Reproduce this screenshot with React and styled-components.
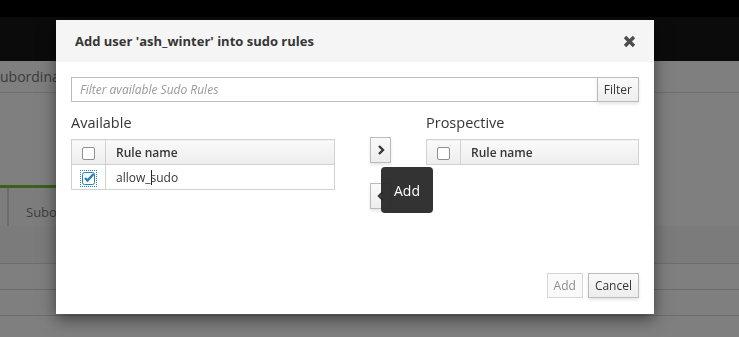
import React from "react";
import styled, { createGlobalStyle } from "styled-components";

const GlobalStyle = createGlobalStyle`
  body {
    margin: 0;
    background: #7f7f7f;
    font-family: "Open Sans", "Noto Sans", sans-serif;
    overflow: hidden;
  }
`;

const Page = styled.div`
  width: 739px;
  height: 337px;
  display: flex;
  flex-direction: column;
  background: #7f7f7f;
`;

const TopBar = styled.div`
  height: 17px;
  background: #000;
`;

const NavBar = styled.div`
  height: 44px;
  background: #0b0b0b;
`;

const PageHead = styled.div`
  height: 31px;
  border-bottom: 1px solid #6f6f6f;
  display: flex;
  align-items: center;
  font-size: 14px;
  color: #3a3a3a;
`;

const Spacer = styled.div`
  height: ${(p) => p.h}px;
`;

const Tabs = styled.div`
  width: 520px;
  height: 38px;
  display: flex;
  border-top: 3px solid #3a5f1f;
`;

const Tab = styled.div`
  width: ${(p) => p.w}px;
  border-right: 2px solid #6c6c6c;
  display: flex;
  align-items: flex-end;
  padding: 0 0 5px ${(p) => p.pad}px;
  font-size: 13px;
  color: #3d3d3d;
  background: #7d7d7d;
`;

const Band = styled.div`
  height: ${(p) => p.h}px;
  background: ${(p) => p.bg};
  border-bottom: 1px solid #6c6c6c;
`;

const Modal = styled.div`
  position: fixed;
  left: 56px;
  top: 20px;
  width: 598px;
  height: 294px;
  background: #fff;
  box-shadow: 0 5px 15px rgba(0, 0, 0, 0.5);
  display: flex;
  flex-direction: column;
`;

const Header = styled.div`
  height: 42px;
  background: #f5f5f5;
  display: flex;
  align-items: center;
  justify-content: space-between;
  padding: 0 19px;
`;

const Title = styled.h4`
  margin: 0;
  font-size: 13px;
  font-weight: 700;
  color: #363636;
`;

const Close = styled.button`
  border: 0;
  background: none;
  padding: 0;
  display: flex;
  margin-right: -1px;
`;

const Body = styled.div`
  flex: 1;
  padding: 15px 15px 0;
`;

const InputGroup = styled.div`
  display: flex;
  height: 25px;
`;

const FilterInput = styled.input`
  flex: 1;
  border: 1px solid #bbb;
  border-right: 0;
  padding: 0 8px;
  font-family: inherit;
  font-size: 12px;
  outline: none;
  &::placeholder {
    color: #999;
    font-style: italic;
  }
`;

const Button = styled.button`
  height: ${(p) => p.h || 25}px;
  width: ${(p) => (p.w ? `${p.w}px` : "auto")};
  padding: 0 ${(p) => (p.w ? 0 : 6)}px;
  border: 1px solid ${(p) => (p.disabled ? "#d6d6d6" : "#bbb")};
  background: ${(p) =>
    p.disabled ? "#fafafa" : "linear-gradient(#fafafa, #ededed)"};
  color: ${(p) => (p.disabled ? "#8b8d8f" : "#363636")};
  font-family: inherit;
  font-size: 12px;
  display: flex;
  align-items: center;
  justify-content: center;
  box-shadow: ${(p) => (p.disabled ? "none" : "0 2px 3px rgba(3,3,3,0.1)")};
`;

const Columns = styled.div`
  display: grid;
  grid-template-columns: 264px 91px 213px;
  margin-top: 9px;
`;

const Label = styled.div`
  font-size: 14.5px;
  color: #363636;
  line-height: 20px;
  padding-top: 2px;
  margin-bottom: 6px;
`;

const Table = styled.table`
  width: 100%;
  border-collapse: collapse;
  font-size: 12px;
  color: #363636;
  td, th {
    border: 1px solid #d1d1d1;
    height: 24px;
    padding: 0;
  }
  th {
    background: linear-gradient(#fafafa, #ededed);
    font-weight: 600;
    text-align: left;
  }
`;

const CheckCell = styled.td`
  width: 33px;
  text-align: center !important;
  vertical-align: middle;
`;

const NameCell = styled.td`
  padding-left: 10px !important;
`;

const Box = styled.span`
  display: inline-block;
  width: 11px;
  height: 11px;
  border: 1px solid #8f8f8f;
  border-radius: 2px;
  background: #fff;
  vertical-align: middle;
`;

const FocusBox = styled.span`
  display: inline-flex;
  outline: 1px dotted #2a7fc0;
  outline-offset: 1px;
  vertical-align: middle;
`;

const Caret = styled.span`
  display: inline-block;
  width: 1px;
  height: 15px;
  background: #222;
  vertical-align: -3px;
  margin-right: -1px;
`;

const Middle = styled.div`
  position: relative;
  display: flex;
  flex-direction: column;
  align-items: center;
  gap: 20px;
  padding-top: 26px;
`;

const Tooltip = styled.div`
  position: absolute;
  left: 46px;
  top: 56px;
  width: 52px;
  height: 46px;
  border-radius: 4px;
  background: rgba(40, 40, 40, 0.95);
  color: #fff;
  font-size: 14px;
  display: flex;
  align-items: center;
  justify-content: center;
`;

const Footer = styled.div`
  display: flex;
  justify-content: flex-end;
  gap: 5px;
  padding: 0 15px 16px;
`;

const Chevron = ({ left }) => (
  <svg width="8" height="10" viewBox="0 0 8 10">
    <path
      d={left ? "M6 1 L2 5 L6 9" : "M2 1 L6 5 L2 9"}
      fill="none"
      stroke="#363636"
      strokeWidth="2.4"
    />
  </svg>
);

const Check = () => (
  <svg width="13" height="13" viewBox="0 0 13 13">
    <rect x="0.5" y="0.5" width="12" height="12" rx="2" fill="#fff" stroke="#2a7fc0" />
    <path d="M3 6 L5.5 8.5 L11.5 2" fill="none" stroke="#2a7fc0" strokeWidth="2.4" />
  </svg>
);

const RuleTable = ({ children }) => (
  <Table>
    <thead>
      <tr>
        <CheckCell as="th">
          <Box />
        </CheckCell>
        <NameCell as="th">Rule name</NameCell>
      </tr>
    </thead>
    {children}
  </Table>
);

export default function App() {
  return (
    <Page>
      <GlobalStyle />
      <TopBar />
      <NavBar />
      <PageHead>ubordinate</PageHead>
      <Spacer h={92} />
      <Tabs>
        <Tab w={7} pad={0} />
        <Tab w={80} pad={17}>
          Subordinate
        </Tab>
      </Tabs>
      <Band h={37} bg="#7b7b7b" />
      <Band h={25} bg="#7f7f7f" />
      <Band h={25} bg="#7f7f7f" />

      <Modal>
        <Header>
          <Title>Add user 'ash_winter' into sudo rules</Title>
          <Close>
            <svg width="13" height="13" viewBox="0 0 13 13">
              <path d="M2 2 L11 11 M11 2 L2 11" stroke="#4d4d4d" strokeWidth="3.4" />
            </svg>
          </Close>
        </Header>
        <Body>
          <InputGroup>
            <FilterInput placeholder="Filter available Sudo Rules" />
            <Button>Filter</Button>
          </InputGroup>
          <Columns>
            <div>
              <Label>Available</Label>
              <RuleTable>
                <tbody>
                  <tr>
                    <CheckCell>
                      <FocusBox>
                        <Check />
                      </FocusBox>
                    </CheckCell>
                    <NameCell>
                      allow_<Caret />sudo
                    </NameCell>
                  </tr>
                </tbody>
              </RuleTable>
            </div>
            <Middle>
              <Button h={26} w={21}>
                <Chevron />
              </Button>
              <Button h={26} w={21}>
                <Chevron left />
              </Button>
              <Tooltip>Add</Tooltip>
            </Middle>
            <div>
              <Label>Prospective</Label>
              <RuleTable />
            </div>
          </Columns>
        </Body>
        <Footer>
          <Button disabled>Add</Button>
          <Button>Cancel</Button>
        </Footer>
      </Modal>
    </Page>
  );
}
